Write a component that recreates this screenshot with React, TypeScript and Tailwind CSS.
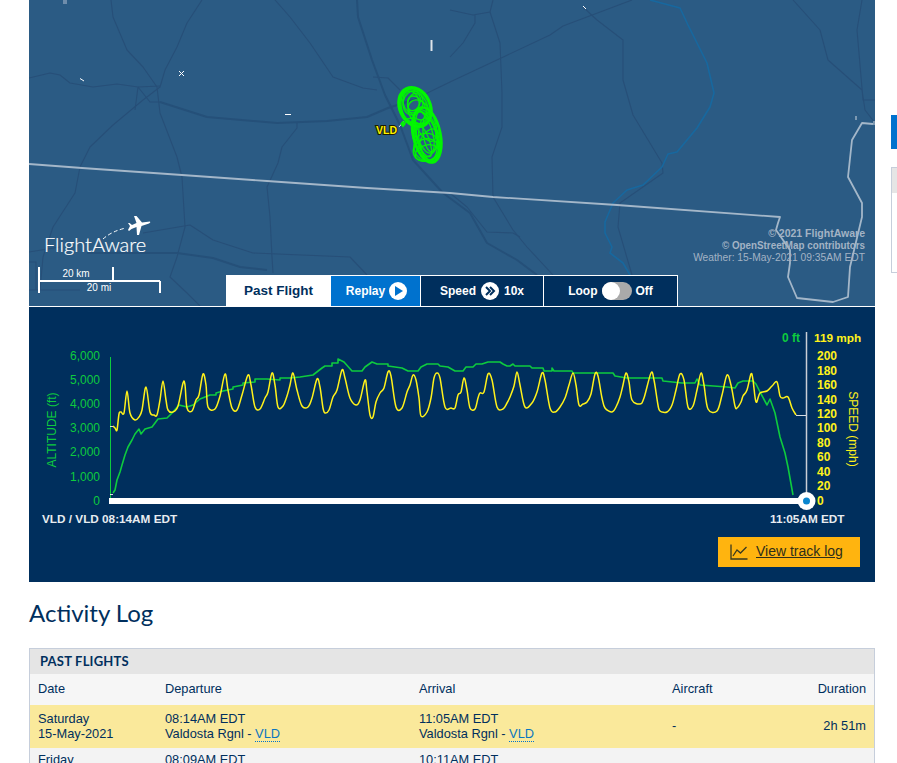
import React from "react";

const yellow: number[][] = [[113,426],[115,428],[117,430],[119,414],[121,412],[124,413],[127,391],[130,413],[135,420],[139,417],[142,410],[146,387],[150,412],[154,415],[157,415],[160,400],[163,381],[166,400],[168,410],[173,412],[178,406],[183,383],[185,385],[187,408],[192,411],[196,400],[199,395],[203,374],[206,385],[208,407],[215,409],[220,396],[225,374],[228,390],[232,408],[237,410],[242,395],[248,375],[251,385],[255,407],[260,409],[265,398],[268,392],[272,373],[275,385],[278,407],[283,406],[287,396],[290,385],[293,373],[297,390],[302,406],[308,407],[312,398],[317,379],[320,387],[323,408],[325,413],[329,410],[333,397],[337,390],[342,370],[345,378],[350,398],[356,405],[360,400],[365,380],[367,392],[370,415],[373,417],[376,402],[380,393],[384,388],[388,372],[391,376],[396,407],[402,408],[407,392],[410,385],[413,375],[416,380],[419,398],[421,416],[427,412],[431,398],[434,378],[437,373],[440,378],[445,407],[451,408],[455,408],[458,395],[461,392],[464,378],[467,390],[470,408],[475,409],[478,398],[480,393],[484,392],[488,374],[492,380],[497,407],[503,409],[507,403],[510,397],[514,386],[517,372],[520,385],[525,407],[532,403],[537,392],[542,373],[545,380],[550,408],[555,412],[560,407],[565,398],[569,385],[573,373],[576,385],[579,405],[583,404],[587,402],[591,394],[595,374],[598,376],[602,398],[605,408],[612,412],[616,407],[620,397],[623,385],[626,373],[629,382],[632,400],[640,404],[644,398],[651,373],[654,380],[658,405],[660,411],[667,412],[672,405],[676,390],[680,374],[684,380],[688,407],[693,406],[697,390],[701,373],[704,385],[708,409],[717,411],[722,395],[727,375],[731,385],[735,406],[737,408],[741,402],[743,396],[747,390],[751,374],[753,380],[756,402],[760,393],[767,391],[772,386],[777,382],[780,396],[783,398],[788,397],[792,408],[796,415]];

const green: number[][] = [[113,493],[115,490],[117,480],[120,472],[122,465],[125,455],[128,447],[132,440],[135,434],[139,429],[141,434],[145,429],[152,427],[155,423],[158,419],[167,418],[172,413],[179,405],[187,407],[193,405],[200,399],[210,395],[216,395],[216,393],[223,391],[233,389],[233,387],[243,385],[243,383],[255,382],[255,379],[267,379],[280,380],[280,378],[290,378],[300,377],[313,375],[322,368],[325,366],[332,366],[332,363],[338,363],[338,359],[344,362],[352,371],[362,371],[365,367],[372,362],[377,364],[388,364],[388,366],[402,368],[408,371],[418,371],[421,367],[427,364],[438,364],[440,366],[448,367],[455,371],[463,371],[466,367],[473,367],[476,364],[482,364],[488,362],[500,362],[503,364],[507,366],[510,366],[513,364],[515,366],[530,366],[532,368],[543,368],[544,371],[552,371],[552,368],[554,371],[572,371],[573,373],[600,373],[613,373],[615,376],[627,378],[662,378],[663,381],[682,383],[695,383],[697,379],[700,385],[727,387],[735,388],[738,383],[743,381],[753,381],[756,384],[760,392],[767,405],[770,399],[775,413],[780,437],[785,453],[788,467],[793,495]];

const pts = (a: number[][]) => a.map((p) => p.join(",")).join(" ");

const smooth = (a: number[][]) => {
  let d = `M${a[0][0]} ${a[0][1]}`;
  for (let i = 0; i < a.length - 1; i++) {
    const p0 = a[Math.max(i - 1, 0)];
    const p1 = a[i];
    const p2 = a[i + 1];
    const p3 = a[Math.min(i + 2, a.length - 1)];
    const c1x = p1[0] + (p2[0] - p0[0]) / 6;
    const c1y = p1[1] + (p2[1] - p0[1]) / 6;
    const c2x = p2[0] - (p3[0] - p1[0]) / 6;
    const c2y = p2[1] - (p3[1] - p1[1]) / 6;
    d += ` C${c1x} ${c1y} ${c2x} ${c2y} ${p2[0]} ${p2[1]}`;
  }
  return d;
};

const roadsThin = [
  "M111 0 L113 17 L127 50 L143 67 L157 87 L160 113 L177 157 L182 177 L185 227 L177 257 L170 277 L187 293 L200 306",
  "M202 0 L187 23 L177 47 L165 70 L160 87 L143 100 L113 125 L90 147 L80 167 L75 193 L53 227 L43 257 L40 290",
  "M275 0 L290 17 L310 43 L333 77 L363 88 L377 90 M373 77 L388 78 L400 90",
  "M29 78 L50 73 L60 75 L70 83 L93 87 L117 84 L138 87 L160 86",
  "M138 87 L135 110 M138 87 L150 102 L160 102",
  "M297 123 L297 128 L282 147 L278 163 L267 187 L270 217 L272 257 L273 273",
  "M143 233 L190 225 L213 240 L253 253 L350 257 L367 275",
  "M490 12 L500 43 L502 93 L502 127 L492 157 L493 197 L513 230 L527 247 L553 275",
  "M450 10 L473 15 L490 12 L493 0 M475 15 L475 23 L463 43 L450 57",
  "M583 7 L597 20 L623 40 L623 80 L633 115 L662 163 L663 173 L620 203 L618 227 L632 275",
  "M793 0 L820 30 L828 60 L862 90 L865 110 L875 123 M862 0 L857 30 L863 100 L875 100",
  "M450 193 L467 207 L487 232 L513 233 L520 237",
  "M450 82 L550 35 L563 26 L632 0",
  "M413 100 L450 82",
  "M29 252 L60 247 M29 290 L80 290 M29 262 L36 262 L36 290",
];

const loops = [
  [415, 107, 15, 20, -25],[415, 107, 14, 19, -25],[414, 107, 13, 18, -28],[416, 108, 14, 20, -22],[413, 103, 10, 12, 10],[417, 108, 8, 13, -30],[414, 102, 6, 9, 20],[419, 112, 10, 13, -35],[411, 102, 8, 11, -15],
  [427, 135, 13, 28, -12],[426, 136, 12, 27, -15],[425, 137, 12, 26, -16],[428, 134, 12, 27, -10],[428, 139, 9, 21, -8],[424, 132, 8, 22, -18],[429, 143, 9, 15, 25],[427, 147, 13, 14, -15],[426, 150, 13, 11, -20],[430, 132, 7, 20, -5],[423, 140, 6, 18, -22],[427, 153, 12, 8, -15],[425, 126, 8, 17, -30],
];

function Plane() {
  return (
    <>
      <path d="M134 216 L136.5 216 L142 222.5 L150 221.5 Q151 222.5 149 223.5 L141.5 226 L139 235 L137 235 L136.5 227 L131.5 229 L129 231 L128 230 L130 226 L128 223 L129.5 223 L132 225 L136.5 223 Z" fill="#fff" />
      <path d="M103 239 Q112 231 126 228" fill="none" stroke="#fff" strokeWidth="1" strokeDasharray="4 2.5" />
    </>
  );
}

function MapPanel() {
  return (
    <div className="relative h-[306px] overflow-hidden bg-[#2b5b84]">
      <svg className="absolute inset-0" width="846" height="306" viewBox="29 0 846 306">
        <g fill="none" stroke="#274f78" strokeWidth="1.1" strokeLinejoin="round">
          {roadsThin.map((d, i) => <path key={i} d={d} />)}
        </g>
        <g fill="none" stroke="#255079" strokeWidth="2" strokeLinejoin="round">
          <path d="M357 0 L358 17 L372 60 L385 95 L400 125 L413 160 L443 193 L470 213 L487 243 L517 260 L537 275" />
          <path d="M160 102 L207 117 L277 123 L327 121 L367 117 L388 108 L413 100" />
          <path d="M87 253 L130 253 L177 253 L213 258 L240 267 L267 270" />
        </g>
        <path d="M650 0 L680 8 L688 25 L707 63 L714 93 L710 107 L697 128 L677 152 L668 154 L662 167 L643 185 L627 190 L613 203 L605 222 L605 233 L612 247 L610 253 L623 263 L630 275" fill="none" stroke="#17689f" strokeWidth="1.6" strokeLinejoin="round" />
        <path d="M29 164 L82 168 L182 175 L267 181 L367 188 L450 193 L493 197 L617 205 L780 217 L778 223 L776 230 L790 250 L790 263 L788 277 L797 298 L833 302 L848 297 L850 267 L862 217 L862 203 L848 177 L852 140 L862 123 L873 124" fill="none" stroke="#a4b7c9" strokeWidth="1.8" strokeLinejoin="round" />
        <g fill="none" stroke="#fff">
          <rect x="63" y="0" width="4" height="4" fill="#6f8dab" stroke="none" />
          <path d="M80 78.5 L84 81" />
          <path d="M179 71 L184 76 M184 71 L179 76" />
          <path d="M285 114.5 L291 114.5" />
          <path d="M431.5 40 L431.5 51" stroke="#dfe5ea" strokeWidth="2" />
          <path d="M583 6 L586 9" />
          <path d="M856 116 L856 120" stroke="#cfd8e0" />
          <path d="M874 121 L874 125" stroke="#cfd8e0" />
          <path d="M399 127 L404 121" stroke="#dfe5ea" />
        </g>
        <g fill="none" stroke="#02f502" strokeWidth="1.3">
          {loops.map((l, i) => (
            <ellipse key={i} cx={l[0]} cy={l[1]} rx={l[2]} ry={l[3]} transform={`rotate(${l[4]} ${l[0]} ${l[1]})`} />
          ))}
          <ellipse cx="415" cy="107" rx="15.5" ry="20.5" transform="rotate(-25 415 107)" strokeWidth="2.6" />
          <ellipse cx="427" cy="135" rx="13.5" ry="28" transform="rotate(-12 427 135)" strokeWidth="2.6" />
          <path d="M404 125 L407 119 L412 118 L416 125 L417 140 L422 150" />
          <path d="M401 124 L403 121.5 L405 124 L403 126.5 Z" fill="#02f502" />
        </g>
        <text x="376" y="134" fontFamily="'Liberation Sans', sans-serif" fontSize="10.5" fontWeight="700" fill="#fff200" stroke="#1c1c00" strokeWidth="2" paintOrder="stroke">VLD</text>
        <Plane />
        <text x="44" y="252" fontFamily="Lato, sans-serif" fontSize="20" fontWeight="300" fill="#fff" stroke="#fff" strokeWidth="0.2">FlightAware</text>
        <g stroke="#fff" strokeWidth="2" fill="none">
          <path d="M39 267 L39 293 M39 281 L160 281 M113 267 L113 281 M160 281 L160 293" />
        </g>
        <g fontFamily="'Liberation Sans', sans-serif" fontSize="10" fill="#fff" textAnchor="middle">
          <text x="76" y="277">20 km</text>
          <text x="99" y="291">20 mi</text>
        </g>
        <g fontFamily="'Liberation Sans', sans-serif" fontSize="10.25" fill="#a3b3c4" textAnchor="end">
          <text x="865" y="237" fontSize="10.5" fontWeight="700">© 2021 FlightAware</text>
          <text x="865" y="249" fontWeight="700" fontSize="10" textLength="143" lengthAdjust="spacingAndGlyphs">© OpenStreetMap contributors</text>
          <text x="865" y="261">Weather: 15-May-2021 09:35AM EDT</text>
        </g>
      </svg>
      <div className="absolute bottom-0 left-[197px] flex h-[31px] w-[452px] border-t border-white text-[12px] font-bold text-white">
        <div className="flex w-[105px] items-center justify-center bg-white text-[13.5px] text-[#002f5d]">Past Flight</div>
        <div className="flex w-[89px] items-center justify-center gap-1 bg-[#0072ce] pl-[2px]">
          <span>Replay</span>
          <svg width="18" height="18" viewBox="0 0 18 18">
            <circle cx="9" cy="9" r="9" fill="#fff" />
            <path d="M6 4 L14 9 L6 14 Z" fill="#0072ce" />
          </svg>
        </div>
        <div className="flex w-[123px] items-center justify-center gap-[5px] border-l border-white bg-[#002f5d]">
          <span>Speed</span>
          <svg width="18" height="18" viewBox="0 0 18 18">
            <circle cx="9" cy="9" r="9" fill="#fff" />
            <path d="M5 5 L9 9 L5 13 M9 5 L13 9 L9 13" fill="none" stroke="#002f5d" strokeWidth="2" />
          </svg>
          <span>10x</span>
        </div>
        <div className="flex w-[135px] items-center justify-center gap-1 border-x border-white bg-[#002f5d]">
          <span>Loop</span>
          <span className="h-[18px] w-[30px] rounded-full bg-[#aaaaaa]">
            <span className="block h-[18px] w-[18px] rounded-full bg-white" />
          </span>
          <span>Off</span>
        </div>
      </div>
    </div>
  );
}

const altLabels = [["6,000", 360], ["5,000", 384], ["4,000", 408], ["3,000", 432], ["2,000", 456], ["1,000", 481], ["0", 505]] as const;
const spdLabels = [["200", 360], ["180", 375], ["160", 389], ["140", 404], ["120", 418], ["100", 432], ["80", 447], ["60", 461], ["40", 476], ["20", 490], ["0", 505]] as const;

function ChartPanel() {
  return (
    <div className="flex h-[275px] flex-col bg-[#002f5d]">
      <svg className="block shrink-0" width="846" height="230" viewBox="29 307 846 230" fontFamily="'Liberation Sans', sans-serif" fontSize="12">
        <path d="M110.5 357 L110.5 498" stroke="#0ecb3e" strokeWidth="1" />
        <path d="M806.5 332 L806.5 500" stroke="#c9ced6" strokeWidth="1.5" />
        <path d="M110 426.5 L113 426.5 M110 494.5 L113 494.5 M796 415.5 L806 415.5" stroke="#d8dde3" strokeWidth="1" />
        <polyline points={pts(green)} fill="none" stroke="#0ecb3e" strokeWidth="1.6" strokeLinejoin="round" />
        <path d={smooth(yellow)} fill="none" stroke="#fff21a" strokeWidth="1.5" strokeLinejoin="round" />
        <rect x="109" y="498" width="697" height="6" fill="#fff" />
        <circle cx="806.5" cy="501" r="9" fill="#fff" />
        <circle cx="806.5" cy="501" r="3.5" fill="#0a86cf" />
        <g fill="#0ecb3e" textAnchor="end">
          {altLabels.map(([t, y]) => <text key={t} x="100" y={y}>{t}</text>)}
        </g>
        <g fill="#fff21a" fontWeight="700">
          {spdLabels.map(([t, y]) => <text key={t} x="817" y={y}>{t}</text>)}
        </g>
        <text x="800" y="342" fill="#0ecb3e" fontWeight="700" textAnchor="end">0 ft</text>
        <text x="814" y="342" fill="#fff21a" fontWeight="700" fontSize="11.8">119 mph</text>
        <text transform="translate(56 430) rotate(-90)" fill="#0ecb3e" textAnchor="middle">ALTITUDE (ft)</text>
        <text transform="translate(849 429) rotate(90)" fill="#fff21a" textAnchor="middle">SPEED (mph)</text>
        <text x="42" y="523" fill="#e8ecf0" fontWeight="700" fontSize="11.75">VLD / VLD 08:14AM EDT</text>
        <text x="770" y="523" fill="#e8ecf0" fontWeight="700" fontSize="11.75">11:05AM EDT</text>
      </svg>
      <div className="flex justify-end pr-[15px]">
        <div className="flex h-[30px] w-[142px] items-center gap-[8px] bg-[#ffb40f] pb-px pl-3 text-[14px] text-[#2e2e1a]">
          <svg width="18" height="16" viewBox="0 0 18 16" fill="none" stroke="#3a3a20" strokeWidth="1.3">
            <path d="M1 0.5 L1 15 L17.5 15" />
            <path d="M3 12 L7 6 L10.5 9 L16.5 3" />
          </svg>
          <span className="underline">View track log</span>
        </div>
      </div>
    </div>
  );
}

function Code() {
  return <span className="border-b border-dotted border-[#0072ce] text-[#0a76c0]">VLD</span>;
}

function FlightsTable() {
  const cols = "grid grid-cols-[127px_254px_253px_1fr_100px] px-2";
  return (
    <div className="mt-[21px] border border-[#c6cedb] text-[12.8px] leading-[15px] text-[#002f5d]">
      <div className="flex h-[25px] items-center bg-[#e5e5e5] pl-[10px] font-['Lato',sans-serif] text-[13px] font-bold tracking-[0.2px]">PAST FLIGHTS</div>
      <div className={`${cols} h-[31px] items-center bg-[#f6f6f6] pb-[2px]`}>
        <div>Date</div>
        <div>Departure</div>
        <div>Arrival</div>
        <div>Aircraft</div>
        <div className="text-right">Duration</div>
      </div>
      <div className={`${cols} h-[43px] items-center bg-[#fae99b] pb-[2px]`}>
        <div>Saturday<br />15-May-2021</div>
        <div>08:14AM EDT<br />Valdosta Rgnl - <Code /></div>
        <div>11:05AM EDT<br />Valdosta Rgnl - <Code /></div>
        <div>-</div>
        <div className="text-right">2h 51m</div>
      </div>
      <div className={`${cols} bg-[#f3f3f3] pt-[4px]`}>
        <div>Friday</div>
        <div>08:09AM EDT</div>
        <div>10:11AM EDT</div>
      </div>
    </div>
  );
}

export default function App() {
  return (
    <div className="flex h-[763px] w-[897px] overflow-hidden bg-white font-['Liberation_Sans',Arial,sans-serif]">
      <main className="ml-[29px] w-[846px] shrink-0">
        <MapPanel />
        <div className="h-px bg-white" />
        <ChartPanel />
        <h2 className="mt-4 font-['Lato',sans-serif] text-[24px] leading-[29px] font-normal text-[#002f5d]">Activity Log</h2>
        <FlightsTable />
      </main>
      <aside className="ml-4 w-[300px] shrink-0 pt-[115px]">
        <div className="h-[34px] bg-[#0072ce]" />
        <div className="mt-[18px] h-[106px] border border-[#c6cedb]">
          <div className="h-[25px] bg-[#e5e5e5]" />
        </div>
      </aside>
    </div>
  );
}
